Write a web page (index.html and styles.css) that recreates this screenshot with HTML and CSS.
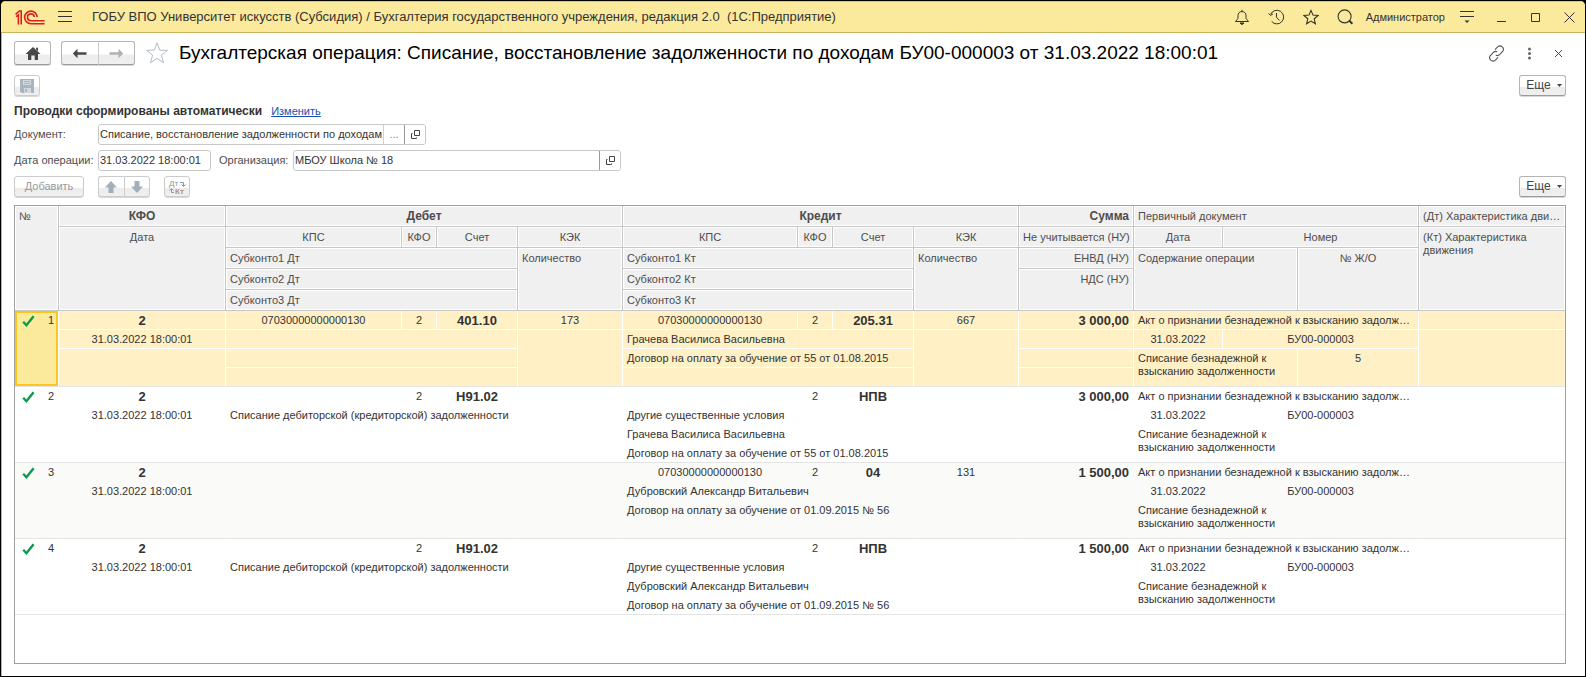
FILE: index.html
```
<!DOCTYPE html>
<html lang="ru">
<head>
<meta charset="utf-8">
<title>Бухгалтерская операция</title>
<link rel="stylesheet" href="styles.css">
</head>
<body>
<svg class="defs" aria-hidden="true">
  <symbol id="check" viewBox="0 0 13 12"><path d="M1.2 6.8 4.4 10.2 11.6 1.2" fill="none" stroke="#0a9a4a" stroke-width="2.4"/></symbol>
  <symbol id="open" viewBox="0 0 11 11"><path d="M4.5 1.5h5v5h-5zM2.5 4.5h-1v5h5v-1" fill="none" stroke="#444" stroke-width="1"/></symbol>
</svg>
<div class="window">
  <header class="titlebar">
    <svg class="logo" width="30" height="15" viewBox="0 0 30 15" fill="none" stroke="#dc1f1c" stroke-width="1.6"><path d="M.6 4.4 4.4 1H6.2V14.4M1 6.6 3.4 5V14.4"/><path d="M22.2 7A6.3 6.3 0 1 0 16 13.7H29.6"/><path d="M19.3 7A3.4 3.4 0 1 0 16 10.7H29.6"/></svg>
    <button class="icon burger" aria-label="Меню"><svg width="14" height="12" viewBox="0 0 14 12" stroke="#333" stroke-width="1"><path d="M0 .5h14M0 5.5h14M0 10.5h14"/></svg></button>
    <span class="app-title">ГОБУ ВПО Университет искусств (Субсидия) / Бухгалтерия государственного учреждения, редакция 2.0 &nbsp;(1С:Предприятие)</span>
    <div class="title-tools">
      <button class="icon" aria-label="Оповещения"><svg width="16" height="16" viewBox="0 0 16 16" fill="none" stroke="#333" stroke-width="1"><path d="M1.5 12.5h13L12 9.4V6.6C12 4 10.4 2.6 8 2.6S4 4 4 6.6v2.8zM8 2.6V.8"/><path d="M6 14h4L8 15.6z" fill="#333"/></svg></button>
      <button class="icon" aria-label="История"><svg width="17" height="16" viewBox="0 0 17 16" fill="none" stroke="#333" stroke-width="1"><path d="M2.6 5.4A6.8 6.8 0 1 1 3.6 12.4"/><path d="M.5 4.5 2.6 6.4 5 4.8M8.5 4v4.4l3 3"/></svg></button>
      <button class="icon" aria-label="Избранное"><svg width="16" height="16" viewBox="0 0 16 16" fill="none" stroke="#333" stroke-width="1.1"><path d="M8 1.4l2 4.7 5.1.4-3.9 3.3 1.2 5L8 12.1l-4.4 2.7 1.2-5L.9 6.5 6 6.1z"/></svg></button>
      <button class="icon" aria-label="Поиск"><svg width="17" height="16" viewBox="0 0 17 16" fill="none" stroke="#333" stroke-width="1.1"><circle cx="7.6" cy="7.4" r="6.5"/><path d="M12 11.6 15.4 14.800" stroke-width="2"/></svg></button>
      <span class="user">Администратор</span>
      <button class="icon" aria-label="Настройки"><svg width="16" height="14" viewBox="0 0 16 14" stroke="#333"><path d="M1 1.5h14M1 6.5h14"/><path d="M5.5 10.5h5L8 13z" fill="#333" stroke="none"/></svg></button>
      <button class="icon win first" aria-label="Свернуть"><svg width="11" height="11" viewBox="0 0 11 11" stroke="#333"><path d="M1 9.5h9"/></svg></button>
      <button class="icon win" aria-label="Развернуть"><svg width="11" height="11" viewBox="0 0 11 11" fill="none" stroke="#333"><path d="M1.5 1.5h8v8h-8z"/></svg></button>
      <button class="icon win" aria-label="Закрыть"><svg width="11" height="11" viewBox="0 0 11 11" stroke="#333" stroke-width="1"><path d="M.5.5l10 10M10.5.5l-10 10"/></svg></button>
    </div>
  </header>

  <main class="content">
    <div class="head">
      <button class="btn home" aria-label="Начальная страница"><svg width="16" height="13" viewBox="0 0 16 13" fill="#484848"><path d="M8 0 15.5 7H13v6H9.7V8.6H6.3V13H3V7H.5zM11 .8h2v3.5l-2-2z"/></svg></button>
      <div class="group nav">
        <button class="btn" aria-label="Назад"><svg width="15" height="11" viewBox="0 0 15 11"><path d="M5.5.8.8 5.5l4.7 4.7V6.7h9V4.300h-9z" fill="#484848"/></svg></button>
        <button class="btn" aria-label="Вперед" disabled><svg width="15" height="11" viewBox="0 0 15 11"><path d="M9.5.8l4.7 4.7-4.7 4.7V6.7h-9V4.300h9z" fill="#b0b0b0"/></svg></button>
      </div>
      <button class="icon fav" aria-label="В избранное"><svg width="24" height="24" viewBox="0 0 24 24" fill="none" stroke="#b4bcc2" stroke-width="1"><path d="M12 1.8l2.7 7.3 7.8.3-6.1 4.8 2.1 7.5L12 17.4l-6.5 4.3 2.1-7.5L1.5 9.4l7.8-.3z"/></svg></button>
      <h1>Бухгалтерская операция: Списание, восстановление задолженности по доходам БУ00-000003 от 31.03.2022 18:00:01</h1>
      <div class="form-tools">
        <button class="icon" aria-label="Получить ссылку"><svg width="17" height="17" viewBox="0 0 17 17" fill="none" stroke="#555" stroke-width="1.1"><path d="M7 4.6l2.6-2.7c3-2.8 7.6 1 5 4.6l-3 3.2c-1.1 1-2.5 1.1-3.8.5"/><path d="M10 12.4l-2.6 2.7c-3 2.8-7.6-1-5-4.6l3-3.2c1.1-1 2.5-1.1 3.800-.5"/></svg></button>
        <button class="icon" aria-label="Действия"><svg width="5" height="13" viewBox="0 0 5 13" fill="#666"><circle cx="2.5" cy="2" r="1.5"/><circle cx="2.5" cy="6.5" r="1.5"/><circle cx="2.5" cy="11" r="1.5"/></svg></button>
        <button class="icon" aria-label="Закрыть форму"><svg width="9" height="9" viewBox="0 0 9 9" stroke="#444" stroke-width="1"><path d="M1 1l7 7M8 1 1 8"/></svg></button>
      </div>
    </div>

    <div class="bar save-bar">
      <button class="btn square" aria-label="Записать" disabled><svg width="14" height="14" viewBox="0 0 14 14"><path d="M0 0h14v14H1.5L0 12.5z" fill="#a9b4bd"/><path d="M3 1h8v5H3zM4 9h7v5H4z" fill="#d3dadf"/><path d="M4 2.5h6M4 4.5h6" stroke="#a9b4bd"/><path d="M5 10h2v3H5z" fill="#a9b4bd"/></svg></button>
      <button class="btn more">Еще<svg width="5" height="3" viewBox="0 0 5 3"><path d="M0 0h5L2.500 3z" fill="#444"/></svg></button>
    </div>

    <div class="notice"><strong>Проводки сформированы автоматически</strong><a href="#">Изменить</a></div>

    <div class="fields">
      <label class="lead" for="doc">Документ:</label>
      <div class="field wide">
        <input id="doc" value="Списание, восстановление задолженности по доходам">
        <button class="pick soft" aria-label="Выбрать">...</button>
        <button class="pick" aria-label="Открыть документ"><svg width="11" height="11"><use href="#open"/></svg></button>
      </div>
    </div>
    <div class="fields">
      <label class="lead" for="date">Дата операции:</label>
      <div class="field date"><input id="date" value="31.03.2022 18:00:01"></div>
      <label class="second" for="org">Организация:</label>
      <div class="field wide">
        <input id="org" value="МБОУ Школа № 18">
        <button class="pick" aria-label="Открыть организацию"><svg width="11" height="11"><use href="#open"/></svg></button>
      </div>
    </div>

    <div class="bar">
      <button class="btn add" disabled>Добавить</button>
      <div class="group move">
        <button class="btn" aria-label="Переместить вверх" disabled><svg width="12" height="12" viewBox="0 0 12 12" fill="#a3afb8"><path d="M6 0l6 6.500H8.500V12h-5V6.500H0z"/></svg></button>
        <button class="btn" aria-label="Переместить вниз" disabled><svg width="12" height="12" viewBox="0 0 12 12" fill="#a3afb8"><path d="M6 12l6-6.500H8.500V0h-5v5.500H0z"/></svg></button>
      </div>
      <button class="btn square" aria-label="Дебет и кредит" disabled><svg width="18" height="18" viewBox="0 0 18 18" class="dtkt"><text x="1" y="8" fill="#84979a">Дт</text><text x="7" y="16" class="kt" fill="#b08f86">Кт</text><path d="M12 4.500h3.500V8M13.500 6.500l2 2 2-2" fill="none" stroke="#84979a"/><path d="M6 14.500H3.500V11M1.500 12.500l2-2 2 2" fill="none" stroke="#b08f86"/></svg></button>
      <button class="btn more">Еще<svg width="5" height="3" viewBox="0 0 5 3"><path d="M0 0h5L2.500 3z" fill="#444"/></svg></button>
    </div>

    <div class="grid">
      <table>
        <colgroup><col class="w44"><col class="w167"><col class="w176"><col class="w35"><col class="w81"><col class="w105"><col class="w175"><col class="w35"><col class="w81"><col class="w105"><col class="w115"><col class="w89"><col class="w75"><col class="w121"><col class="w146"></colgroup>
        <thead>
          <tr><th rowspan="5">№</th><th class="c b">КФО</th><th class="c b" colspan="4">Дебет</th><th class="c b" colspan="4">Кредит</th><th class="r b">Сумма</th><th colspan="3">Первичный документ</th><th class="cut">(Дт) Характеристика движения</th></tr>
          <tr><th class="c" rowspan="4">Дата</th><th class="c">КПС</th><th class="c">КФО</th><th class="c">Счет</th><th class="c">КЭК</th><th class="c">КПС</th><th class="c">КФО</th><th class="c">Счет</th><th class="c">КЭК</th><th class="r">Не учитывается (НУ)</th><th class="c">Дата</th><th class="c" colspan="2">Номер</th><th class="wrap" rowspan="4">(Кт) Характеристика движения</th></tr>
          <tr><th colspan="3">Субконто1 Дт</th><th rowspan="3">Количество</th><th colspan="3">Субконто1 Кт</th><th rowspan="3">Количество</th><th class="r">ЕНВД (НУ)</th><th colspan="2" rowspan="3">Содержание операции</th><th class="c" rowspan="3">№ Ж/О</th></tr>
          <tr><th colspan="3">Субконто2 Дт</th><th colspan="3">Субконто2 Кт</th><th class="r" rowspan="2">НДС (НУ)</th></tr>
          <tr><th colspan="3">Субконто3 Дт</th><th colspan="3">Субконто3 Кт</th></tr>
        </thead>
        <tbody class="selected">
          <tr><td class="num" rowspan="4"><div class="mark"><svg width="13" height="12"><use href="#check"/></svg>1</div></td><td class="c b">2</td><td class="c">07030000000000130</td><td class="c">2</td><td class="c b">401.10</td><td class="c">173</td><td class="c">07030000000000130</td><td class="c">2</td><td class="c b">205.31</td><td class="c">667</td><td class="r b">3 000,00</td><td class="cut" colspan="3">Акт о признании безнадежной к взысканию задолженности</td><td></td></tr>
          <tr><td class="c">31.03.2022 18:00:01</td><td colspan="3"></td><td rowspan="3"></td><td colspan="3">Грачева Василиса Васильевна</td><td rowspan="3"></td><td></td><td class="c">31.03.2022</td><td class="c" colspan="2">БУ00-000003</td><td rowspan="3"></td></tr>
          <tr><td rowspan="2"></td><td colspan="3"></td><td colspan="3">Договор на оплату за обучение от 55 от 01.08.2015</td><td></td><td class="wrap" colspan="2" rowspan="2">Списание безнадежной к взысканию задолженности</td><td class="c" rowspan="2">5</td></tr>
          <tr><td colspan="3"></td><td colspan="3"></td><td></td></tr>
        </tbody>
        <tbody>
          <tr><td class="num" rowspan="4"><div class="mark"><svg width="13" height="12"><use href="#check"/></svg>2</div></td><td class="c b">2</td><td></td><td class="c">2</td><td class="c b">Н91.02</td><td></td><td></td><td class="c">2</td><td class="c b">НПВ</td><td></td><td class="r b">3 000,00</td><td class="cut" colspan="3">Акт о признании безнадежной к взысканию задолженности</td><td></td></tr>
          <tr><td class="c">31.03.2022 18:00:01</td><td colspan="3">Списание дебиторской (кредиторской) задолженности</td><td rowspan="3"></td><td colspan="3">Другие существенные условия</td><td rowspan="3"></td><td></td><td class="c">31.03.2022</td><td class="c" colspan="2">БУ00-000003</td><td rowspan="3"></td></tr>
          <tr><td rowspan="2"></td><td colspan="3"></td><td colspan="3">Грачева Василиса Васильевна</td><td></td><td class="wrap" colspan="2" rowspan="2">Списание безнадежной к взысканию задолженности</td><td rowspan="2"></td></tr>
          <tr><td colspan="3"></td><td colspan="3">Договор на оплату за обучение от 55 от 01.08.2015</td><td></td></tr>
        </tbody>
        <tbody class="even">
          <tr><td class="num" rowspan="4"><div class="mark"><svg width="13" height="12"><use href="#check"/></svg>3</div></td><td class="c b">2</td><td></td><td></td><td></td><td></td><td class="c">07030000000000130</td><td class="c">2</td><td class="c b">04</td><td class="c">131</td><td class="r b">1 500,00</td><td class="cut" colspan="3">Акт о признании безнадежной к взысканию задолженности</td><td></td></tr>
          <tr><td class="c">31.03.2022 18:00:01</td><td colspan="3"></td><td rowspan="3"></td><td colspan="3">Дубровский Александр Витальевич</td><td rowspan="3"></td><td></td><td class="c">31.03.2022</td><td class="c" colspan="2">БУ00-000003</td><td rowspan="3"></td></tr>
          <tr><td rowspan="2"></td><td colspan="3"></td><td colspan="3">Договор на оплату за обучение от 01.09.2015 № 56</td><td></td><td class="wrap" colspan="2" rowspan="2">Списание безнадежной к взысканию задолженности</td><td rowspan="2"></td></tr>
          <tr><td colspan="3"></td><td colspan="3"></td><td></td></tr>
        </tbody>
        <tbody>
          <tr><td class="num" rowspan="4"><div class="mark"><svg width="13" height="12"><use href="#check"/></svg>4</div></td><td class="c b">2</td><td></td><td class="c">2</td><td class="c b">Н91.02</td><td></td><td></td><td class="c">2</td><td class="c b">НПВ</td><td></td><td class="r b">1 500,00</td><td class="cut" colspan="3">Акт о признании безнадежной к взысканию задолженности</td><td></td></tr>
          <tr><td class="c">31.03.2022 18:00:01</td><td colspan="3">Списание дебиторской (кредиторской) задолженности</td><td rowspan="3"></td><td colspan="3">Другие существенные условия</td><td rowspan="3"></td><td></td><td class="c">31.03.2022</td><td class="c" colspan="2">БУ00-000003</td><td rowspan="3"></td></tr>
          <tr><td rowspan="2"></td><td colspan="3"></td><td colspan="3">Дубровский Александр Витальевич</td><td></td><td class="wrap" colspan="2" rowspan="2">Списание безнадежной к взысканию задолженности</td><td rowspan="2"></td></tr>
          <tr><td colspan="3"></td><td colspan="3">Договор на оплату за обучение от 01.09.2015 № 56</td><td></td></tr>
        </tbody>
      </table>
    </div>
  </main>
</div>
</body>
</html>
```
FILE: styles.css
```
* { box-sizing: border-box; }
body { margin: 0; background: #000; color: #333; font: 11px/13px "Liberation Sans", Arial, sans-serif; }
button, input { font: inherit; color: inherit; margin: 0; padding: 0; }
svg { display: block; flex: none; }
.defs { position: absolute; width: 0; height: 0; }

.window { min-height: 100vh; display: flex; flex-direction: column; border: 1px solid #000; border-radius: 6px 6px 0 0; background: #fff; overflow: hidden; }

.titlebar { display: flex; align-items: center; height: 32px; padding: 0 10px 0 14px; background: #fbea9c; border-top: 1px solid #d9c678; border-bottom: 1px solid #c9b55c; }
.icon { display: flex; align-items: center; justify-content: center; border: 0; background: none; }
.burger { margin: 0 20px 0 13px; }
.app-title { flex: 1; min-width: 0; font-size: 13px; line-height: 16px; white-space: nowrap; overflow: hidden; }
.title-tools { display: flex; align-items: center; gap: 18px; }
.user { margin: 0 -4px 0 -6px; white-space: nowrap; }
.win { margin-left: 5px; }
.win.first { margin-left: 3px; }

.content { flex: 1; display: flex; flex-direction: column; padding: 8px 19px 12px 12px; border-left: 1px solid #c9b55c; }
.head { display: flex; align-items: center; height: 24px; }
.head h1 { flex: 1; min-width: 0; margin: 0 0 0 10px; color: #000; font-size: 19px; line-height: 24px; font-weight: 400; white-space: nowrap; overflow: hidden; }
.form-tools { display: flex; align-items: center; gap: 22px; padding-right: 3px; }
.fav { margin-left: 10px; }

.btn { display: flex; align-items: center; justify-content: center; height: 21px; border: 1px solid #b4b4b4; border-bottom-color: #9a9a9a; border-radius: 3px; background: linear-gradient(#fff 55%, #ececec 60%, #f0f0f0); box-shadow: 0 1px 0 #d8d8d8; color: #444; }
.btn:disabled { color: #999; border-color: #ccc; }
.home { width: 37px; height: 24px; }
.group { display: flex; }
.group .btn { flex: 1; }
.group .btn:first-child { border-radius: 3px 0 0 3px; border-right: 0; }
.group .btn:last-child { border-radius: 0 3px 3px 0; border-left-color: #ccc; }
.nav { width: 74px; margin-left: 10px; }
.nav .btn { height: 24px; }
.nav .btn:disabled { border-color: #b4b4b4 #b4b4b4 #9a9a9a #ccc; }

.bar { display: flex; align-items: center; gap: 14px; margin: 5px 0 8px; }
.save-bar { margin: 10px 0 7px; }
.square { width: 26px; }
.add { width: 70px; }
.move { width: 52px; }
.more { width: 47px; margin-left: auto; padding-left: 3px; gap: 6px; font-size: 12px; }
.dtkt { font: 8px "Liberation Sans", Arial, sans-serif; }
.kt { font-weight: 700; }

.notice { display: flex; align-items: center; gap: 9px; height: 16px; }
.notice strong { font-size: 12px; }
.notice a { color: #1650b0; }

.fields { display: flex; align-items: center; margin-top: 5px; color: #4d4d4d; }
.lead { width: 84px; }
.second { width: 74px; margin-left: 8px; }
.field { display: flex; height: 21px; border: 1px solid #c8c8c8; border-radius: 3px; overflow: hidden; background: #fff; }
.wide { width: 328px; }
.date { width: 113px; }
.field input { flex: 1; min-width: 0; padding: 0 0 0 1px; border: 0; outline: 0; background: none; color: #333; }
.pick { display: flex; align-items: center; justify-content: center; width: 21px; border: 0; border-left: 1px solid #999; background: #fff; }
.soft { border-left-color: #d0d0d0; color: #888; }

.grid { flex: 1; border: 1px solid #a0a0a0; background: #fff; }
table { width: 100%; table-layout: fixed; border-collapse: separate; border-spacing: 0; }
th, td { height: 19px; padding: 3px 4px 2px; border: 0 solid transparent; border-width: 0 1px 1px 0; font-weight: 400; text-align: left; vertical-align: top; white-space: nowrap; overflow: hidden; }
th { height: 21px; padding: 4px 4px 3px; background: #f0f0f0; border-color: #c6c6c6; box-shadow: inset 0 0 0 1px #fff; color: #4d4d4d; }
tr:first-child > :last-child, tr:nth-child(2) > :last-child { border-right-width: 0; }
.c { text-align: center; }
.r { text-align: right; }
.b { font-weight: 700; }
th.b { font-size: 12px; }
td.b { font-size: 13px; }
th.c, td.c { padding-left: 2px; padding-right: 2px; }
.cut { text-overflow: ellipsis; }
.wrap { white-space: normal; }
.mark { display: flex; justify-content: space-between; align-items: center; padding-left: 3px; }

tbody tr:last-child td, tr:first-child .num, tr:nth-child(2) td[rowspan="3"], tr:nth-child(3) td[rowspan="2"] { border-bottom-color: #e4e4e4; }
.even td { background: #fafaf8; }
.selected td { background: #fff0c6; border-right-color: #fff; border-bottom-color: #fff; }
.selected tr:last-child td, .selected tr:nth-child(2) td[rowspan="3"], .selected tr:nth-child(3) td[rowspan="2"] { border-bottom-color: #e4e4e4; }
.selected .num { background: #fbea9c; box-shadow: inset 0 0 0 2px #fcc61c; }

.w35 { width: 35px; }
.w44 { width: 44px; }
.w75 { width: 75px; }
.w81 { width: 81px; }
.w89 { width: 89px; }
.w105 { width: 105px; }
.w115 { width: 115px; }
.w121 { width: 121px; }
.w146 { width: 146px; }
.w167 { width: 167px; }
.w175 { width: 175px; }
.w176 { width: 176px; }
```
